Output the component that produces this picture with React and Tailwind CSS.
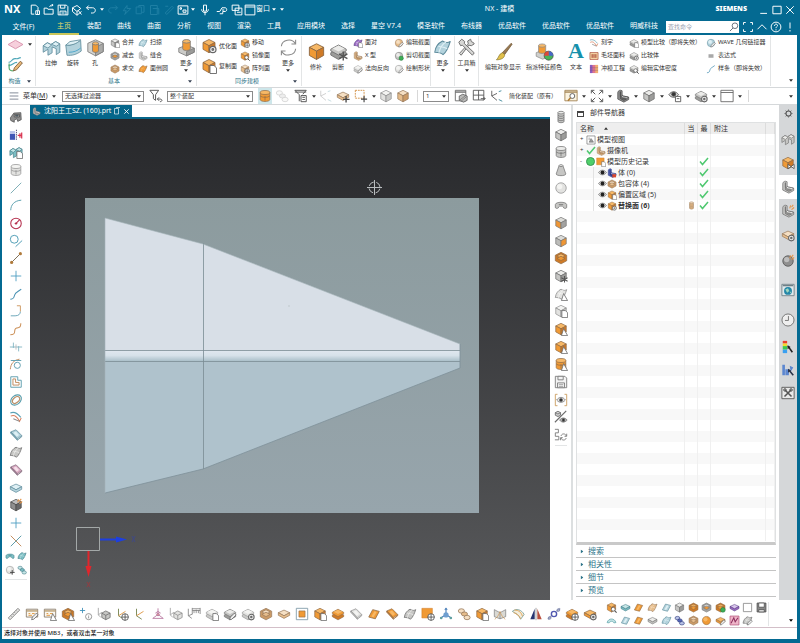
import { useState } from "react";

const TONES = {
  gray: ["#ececea", "#c6c6c4", "#9c9c9a", "#6c6c6c"],
  light: ["#f4f4f2", "#e2e2e0", "#cacac8", "#8e8e8e"],
  dark: ["#bdbdbd", "#8f8f8f", "#686868", "#484848"],
  orange: ["#f7b866", "#f09a35", "#cf7a26", "#8f6a45"],
  mix: ["#dcdcd8", "#ef9634", "#a2a2a0", "#757575"],
  mix2: ["#dcdcd8", "#bcbcb9", "#ef9634", "#757575"],
  tan: ["#f5dfc3", "#e6bd8c", "#cb9a66", "#97785a"],
  blue: ["#dff0f5", "#b3d2dc", "#8ab0bd", "#5d8b9b"],
  teal: ["#c5e6e6", "#7dbfc4", "#4f959d", "#3c7884"],
  red: ["#f3c9c0", "#d96a54", "#a33a2c", "#7c3028"],
  pink: ["#f6e0ea", "#d8a8c0", "#a87f98", "#80687a"],
  purple: ["#d9c5ec", "#9c6bc4", "#6b47a0", "#51367c"],
  navy: ["#b8c2e6", "#5566b8", "#2c3c8a", "#26327a"],
};

// Solid shapes and line drawings, all on a 16 x 16 grid. c = [top, left, right, stroke]
const ART = {
  cube: (c) => (
    <g stroke={c[3]} strokeWidth="0.8" strokeLinejoin="round">
      <path d="M8 1.5l6 3-6 3.2-6-3.2z" fill={c[0]} />
      <path d="M2 4.5l6 3.2v7l-6-3.4z" fill={c[1]} />
      <path d="M14 4.5L8 7.7v7l6-3.4z" fill={c[2]} />
    </g>
  ),
  hollow: (c) => (
    <g stroke={c[3]} strokeWidth="0.8" strokeLinejoin="round">
      <path d="M8 1.5l6.5 3.3v6.4L8 14.7l-6.5-3.5V4.8z" fill={c[2]} />
      <path d="M8 3.2l4.8 2.4L8 8.2 3.2 5.6z" fill={c[0]} />
      <path d="M3.4 8.4L8 6l4.6 2.4L8 11z" fill={c[1]} />
    </g>
  ),
  spring: (c) => (
    <g fill={c[0]} stroke={c[3]} strokeWidth="0.8">
      <path d="M4.5 3v10c0 2 7 2 7 0V3" fill={c[1]} />
      <ellipse cx="8" cy="3" rx="3.5" ry="1.5" />
      <path d="M4.5 6c1 1.6 6 1.6 7 0M4.5 8.5c1 1.6 6 1.6 7 0M4.5 11c1 1.6 6 1.6 7 0" fill="none" />
    </g>
  ),
  cylinder: (c) => (
    <g stroke={c[3]} strokeWidth="0.8">
      <path d="M2.5 4v8c0 3 11 3 11 0V4" fill={c[1]} />
      <ellipse cx="8" cy="4" rx="5.5" ry="2.3" fill={c[0]} />
      <path d="M8 8v5M2.5 8c2 2 9 2 11 0" fill="none" />
    </g>
  ),
  cone: (c) => (
    <g stroke={c[3]} strokeWidth="0.8">
      <path d="M5.8 3L2.5 12.5c0 2.6 11 2.6 11 0L10.2 3" fill={c[1]} />
      <ellipse cx="8" cy="3" rx="2.2" ry="1.1" fill={c[0]} />
    </g>
  ),
  sphere: (c) => (
    <g stroke={c[3]} strokeWidth="0.8">
      <circle cx="8" cy="8" r="6" fill={c[1]} />
      <circle cx="6.5" cy="6.3" r="3" fill={c[0]} stroke="none" />
    </g>
  ),
  torus: (c) => (
    <g stroke={c[3]} strokeWidth="0.8">
      <path d="M1.5 11V7.5C2 4 14 4 14.5 7.5V11c-1 1.5-4 1-4-1 0-1-5-1-5 0 0 2-3 2.5-4 1z" fill={c[1]} />
      <path d="M5.5 7.5h5" />
    </g>
  ),
  sheet: (c) => (
    <g stroke={c[3]} strokeWidth="0.9" strokeLinejoin="round">
      <path d="M2 11.5L6.5 3l7.5 2-4.5 8.5z" fill={c[1]} />
      <path d="M5 10.8l3.500-6 2.500.8-3.500 6z" fill={c[0]} stroke="none" />
    </g>
  ),
  sheet2: (c) => (
    <g stroke={c[3]} strokeWidth="0.8" strokeLinejoin="round">
      <path d="M2 4.5l6-2.500 6.500 6.500-5 4z" fill={c[1]} />
      <path d="M2 4.5v1.500l7.500 8v-1.500zM9.500 14l5-4V8.500" fill={c[2]} />
      <path d="M5 5.500l3-1.500 3.500 4-2.500 2z" fill={c[0]} stroke="none" />
    </g>
  ),
  surf: (c) => (
    <g stroke={c[3]} strokeWidth="0.9" strokeLinejoin="round">
      <path d="M1.5 12C2 7 5 4 8 2.5c3 2 5 1.5 6.5.5C13 8 11 12 8.5 14c-2-2-5-2-7-2z" fill={c[1]} />
      <path d="M4.5 7c2.5.5 5 .5 7.5 2M5 12.300C6 8 8 5 11 3.300" fill="none" stroke={c[0]} />
    </g>
  ),
  slab: (c) => (
    <g stroke={c[3]} strokeWidth="0.8" strokeLinejoin="round">
      <path d="M8 3.5l6.5 3L8 10 1.5 6.5z" fill={c[0]} />
      <path d="M1.5 6.5v3L8 13l6.5-3.500v-3L8 10z" fill={c[1]} />
    </g>
  ),
  stack: (c) => (
    <g stroke={c[3]} strokeWidth="0.7" strokeLinejoin="round">
      <path d="M1.5 9L8 5.5 14.5 9v2L8 14.7 1.5 11z" fill={c[2]} />
      <path d="M1.5 6L8 2.5 14.5 6v1.5L8 11 1.5 7.5z" fill={c[1]} />
      <path d="M3 5.500L8 3l5 2.500L8 8z" fill={c[0]} stroke="none" />
    </g>
  ),
  elbow: (c) => (
    <g stroke={c[3]} strokeWidth="0.7" strokeLinejoin="round">
      <path d="M1 12V6.500L4.500 4l3 1.500L11.500 3 15 5v7l-3 2V9L8.500 7.500v5L5 14.500V9.500z" fill={c[1]} />
      <path d="M1 6.500L4.500 4l3 1.500L11.500 3 15 5l-3 2-3.500-1.500L5 8.500z" fill={c[0]} />
    </g>
  ),
  revolve: (c) => (
    <g stroke={c[3]} strokeWidth="0.7" strokeLinejoin="round">
      <path d="M1.500 6C5 6.500 9 5 14 2l.500 9c-4 3-8 4-12 3.500z" fill={c[1]} />
      <path d="M1.500 6L5 3l9-1.500c-3 3.500-8 5-12.500 4.500z" fill={c[0]} />
      <path d="M4 12c4 0 7-1 10-3.500" fill="none" stroke="#3fa0c8" />
    </g>
  ),
  hole: (c) => (
    <g strokeLinejoin="round" strokeWidth="0.7" stroke="#7b7b7b">
      <path d="M8 1.500l6.500 3v7L8 15l-6.500-3.500v-7z" fill="#d3d3d0" />
      <path d="M8 8v7l6.500-3.500v-7z" fill="#aaaaa8" />
      <path d="M5.500 4.500v6.500c0 1.500 5 1.500 5 0V4.500" fill={c[1]} />
      <ellipse cx="8" cy="4.500" rx="2.500" ry="1.300" fill={c[0]} />
    </g>
  ),
  boss: (c) => (
    <g strokeLinejoin="round" strokeWidth="0.7" stroke="#7b7b7b">
      <path d="M1.500 8.500L8 6l6.500 2.500V12L8 15l-6.500-3z" fill="#cbcbc8" />
      <path d="M8 11.500V15l6.500-3V8.500z" fill="#9b9b99" />
      <path d="M4.800 2.800V9c0 2 6.400 2 6.400 0V2.800" fill={c[1]} />
      <ellipse cx="8" cy="2.800" rx="3.200" ry="1.500" fill={c[0]} />
    </g>
  ),
  bracket: (c) => (
    <g stroke={c[3]} strokeWidth="0.8" strokeLinejoin="round">
      <path d="M2 4c0-2 3-3.500 5-2v5c1 2 5 1 7.500 2.500v2.500L9 15 2 11.500z" fill={c[1]} />
      <path d="M5 3v5.500c1 2 5 1.500 7 3L9 13 5 11z" fill={c[2]} />
      <path d="M7 7c1 2 5 1 7.500 2.500L12 11c-2-1-5-.5-6-2z" fill={c[0]} />
    </g>
  ),
  clamp: (c) => (
    <g stroke={c[3]} strokeWidth="0.8">
      <path d="M1.500 9l4-5.500 8-.5.500 8-4 2-1-3-3 1.500v2.500L2 12z" fill={c[1]} />
      <path d="M6 5h6v3H6z" fill={c[0]} />
      <path d="M7.500 6h3v1h-3z" fill="#3f7fa8" />
    </g>
  ),
  push: () => (
    <g>
      <path d="M1 6.500h6v7H1z" fill="#4056b5" />
      <path d="M1 3.500h6v3H1z" fill="#b9c3ea" />
      <path d="M8.500 2v12" stroke="#3a3a6e" strokeDasharray="1.500 1" />
      <path d="M10 8.500h5M12.500 6v5M14.500 5v7" stroke="#d93450" strokeWidth="1.400" fill="none" />
    </g>
  ),
  line: () => <path d="M2 14L14 2" stroke="#6ea3ad" strokeWidth="1" />,
  arc: () => <path d="M2 14C2 8 6 3 14 2.500" stroke="#5b9fae" strokeWidth="1.100" fill="none" />,
  circle: () => (
    <g stroke="#b5304e" fill="none" strokeWidth="1.200">
      <circle cx="8" cy="8.500" r="6" />
      <path d="M8 8.500l4-4M8 7v3M6.500 8.500h3" />
    </g>
  ),
  tangent: () => (
    <g stroke="#4f9db5" fill="none" strokeWidth="1.100">
      <circle cx="6" cy="6" r="4.500" />
      <path d="M7.500 14.500L15 7.500" />
    </g>
  ),
  segment: () => (
    <g fill="#b07b3c" stroke="#7a6a52">
      <path d="M3 13L13 3" strokeWidth="1.100" />
      <circle cx="3" cy="13" r="1.800" stroke="none" />
      <circle cx="13" cy="3" r="1.800" stroke="none" />
    </g>
  ),
  plus: () => <path d="M8 2v12M2 8h12" stroke="#4a9cc0" strokeWidth="1" />,
  cross: () => (
    <g strokeWidth="1.100">
      <path d="M2 14L14 2" stroke="#5a9aa8" />
      <path d="M2 2l12 12" stroke="#c28a5c" />
    </g>
  ),
  spline: () => <path d="M1.500 14c4 0 4-2 5-5s3-3 7.500-6.500" stroke="#4b93b4" strokeWidth="1.200" fill="none" />,
  fillet: () => (
    <g fill="none" strokeWidth="1.100">
      <path d="M2 13.500h5c4 0 6-2 6-5" stroke="#6aa6b8" />
      <path d="M13 8.500V2H9" stroke="#cf9a64" />
    </g>
  ),
  curve: () => <path d="M1.500 14.500c4 0 5-1 5-4s2-4 4-4 3-2 3-5" stroke="#cc9058" strokeWidth="1.200" fill="none" />,
  trim: () => (
    <g strokeWidth="1" fill="none">
      <path d="M1 8h14M5 3v6M11 7v6" stroke="#7fb2c0" />
      <path d="M8 5v6" stroke="#bbb" />
    </g>
  ),
  arccircle: () => (
    <g fill="none" stroke="#63a0b0" strokeWidth="1.100">
      <path d="M1.500 14C2 8 5 3.500 12 2.500" stroke="#c08d60" />
      <circle cx="9.500" cy="9.500" r="3.500" />
      <path d="M2 4h12" />
    </g>
  ),
  offset: () => (
    <g fill="none" strokeWidth="1.100">
      <path d="M2 2h8v4h4v8H2z" stroke="#63a0b0" />
      <path d="M4.500 4.500h3v4h4v3h-7z" stroke="#c08d60" />
    </g>
  ),
  ring: () => (
    <g fill="none" strokeWidth="1.300" transform="rotate(-40 8 8)">
      <ellipse cx="8" cy="8" rx="6.800" ry="5" stroke="#5a9fae" />
      <ellipse cx="8" cy="8" rx="4.800" ry="3" stroke="#b98d66" />
    </g>
  ),
  wrap: () => (
    <g fill="none" strokeWidth="1.200">
      <path d="M1.500 3.500c4-2 8 0 12 5" stroke="#5aa2b5" />
      <path d="M2 7c4-2 7 0 10 6l2-4" stroke="#d97d5a" />
      <path d="M5 10l7 3" stroke="#8a8a8a" />
    </g>
  ),
  axes: () => (
    <g fill="none" strokeWidth="1.100">
      <path d="M4 2v8l6 4" stroke="#7d8a5a" />
      <path d="M4 10l8-5" stroke="#e09a4a" />
    </g>
  ),
  axes3: () => (
    <g fill="none" stroke="#b878a0" strokeWidth="1">
      <path d="M8 1.500v7L2 13M8 8.500l6 4.500M2 13h12M5 7l3-2 3 2" />
      <circle cx="8" cy="8.500" r="1.500" fill="#d99" />
    </g>
  ),
  csys: (c) => (
    <g fill="none" strokeWidth="0.900">
      <path d="M1.500 1v8l3 3M1.500 9l4-3" stroke="#9a9a9a" />
      <path d="M5.500 7l4.500-2.500L15 7v5l-5 2.500L5.500 12z" fill={c[1]} stroke={c[3]} />
      <path d="M5.500 7l4.500 2.500L15 7M10 9.500v5" stroke={c[3]} />
    </g>
  ),
  ruler: () => (
    <g stroke="#6f6f6f" strokeWidth="0.900">
      <path d="M1.500 12.500l11-11 2 2-11 11z" fill="#e8e8e6" />
      <path d="M4.500 10l1 1M6.500 8l1 1M8.500 6l1 1M10.500 4l1 1" />
    </g>
  ),
  panel: () => (
    <g stroke="#8a7d6a" fill="none">
      <path d="M1.500 2.500h13v9h-13z" fill="#faf7f0" />
      <path d="M1.500 4.500h13" strokeWidth="1.500" stroke="#b59a6c" />
      <path d="M4 7.500h2M8 7.500h3M4 9.500h4" stroke="#e0902f" />
    </g>
  ),
  plusinfo: () => (
    <g fill="none" stroke="#8a8a8a">
      <path d="M4 1v6M1 4h6" stroke="#3e8fb8" />
      <circle cx="11" cy="11" r="3.500" />
      <path d="M11 9v.7M11 10.500v2.500" />
    </g>
  ),
  dims: () => (
    <g stroke="#7a7a7a" fill="none" strokeWidth="0.900">
      <path d="M1.500 2v8l4 3M1.500 10l5-2M6 2h9M6 1v7M15 1v7M8 4v3M10.500 3v4M13 4v3M6 4h9" />
    </g>
  ),
  frame: (c) => (
    <g>
      <path d="M1.500 1.500h13v13h-13z" fill="#fff" stroke="#7f9aa8" />
      <path d="M4.500 4.500h7v7h-7z" fill={c[1]} stroke={c[3]} strokeWidth="0.700" />
    </g>
  ),
  square: (c) => <path d="M1 1.500h12v11H1z" fill={c[1]} stroke={c[2]} strokeWidth="0.600" />,
  hullblue: () => (
    <g>
      <path d="M8 1.500v7l6 4M8 8.500l-6 4" stroke="#4a7fb8" strokeWidth="1.300" fill="none" />
      <circle cx="8" cy="9" r="3" fill="#6f9fd0" />
      <path d="M6 3l2-2.500L10 3z" fill="#4a7fb8" />
      <circle cx="2.500" cy="12.500" r="1.500" fill="#5fa0a0" />
      <circle cx="13.500" cy="12.500" r="1.500" fill="#5fa0a0" />
    </g>
  ),
  book: () => (
    <g stroke="#7c7c7c" strokeWidth="0.800" fill="#d9d9d4">
      <path d="M1.500 3L8 6.500 14.500 3v8L8 13.500 1.500 11z" />
      <path d="M8 6.500v7" />
      <path d="M2 14c2-1 5-5 6-9M14 14c-2-1-5-5-6-9" stroke="#d09a58" fill="none" />
    </g>
  ),
  fan: () => (
    <g fill="none" strokeWidth="1">
      <path d="M1.500 5C6 1 12 3 15 8.500L11 14C9 9 5 7 1.500 5z" fill="#f3eddc" stroke="#7ea2a0" />
      <path d="M3 6.500c4 1 6 3 8 7M4 3.500c5 0 8 3 9 7" stroke="#e0a050" />
    </g>
  ),
  mirror: () => (
    <g>
      <path d="M6.500 2v12H1.500z" fill="#27346f" />
      <path d="M9.500 2v12h5z" fill="#b8503f" />
      <path d="M8 1v14" stroke="#555" strokeWidth="0.600" />
    </g>
  ),
  orbit: () => (
    <g fill="none" stroke="#8088b0" strokeWidth="1.100">
      <circle cx="8" cy="8" r="3" stroke="#5058b0" strokeWidth="1.600" />
      <path d="M1 14l4-3.500M11 5l4-3.500" strokeWidth="2" stroke="#a0a6c0" />
      <circle cx="3" cy="12.500" r="1.500" />
      <circle cx="13" cy="3.500" r="1.500" />
    </g>
  ),
  chain: (c) => (
    <g stroke={c[3]} strokeWidth="0.900" fill={c[0]}>
      <ellipse cx="5" cy="4.500" rx="3.500" ry="2.500" />
      <ellipse cx="8.500" cy="8" rx="3.500" ry="2.300" fill={c[1]} />
      <ellipse cx="11.500" cy="12" rx="3.500" ry="2.500" />
    </g>
  ),
  diskette: () => (
    <g stroke="#7a7a7a" fill="#f3f3f3">
      <path d="M1.500 1.500h11l2 2v11h-13z" />
      <path d="M4.500 1.500h6v4h-6zM4 9h8v5.500H4z" />
      <path d="M5.500 11h5M5.500 13h5" strokeWidth="0.700" />
    </g>
  ),
  eyebox: () => (
    <g fill="none">
      <path d="M4 1.500H1.500v13H4M12 1.500h2.500v13H12" stroke="#c99a5a" />
      <path d="M3 8c3-4 7-4 10 0-3 3.500-7 3.500-10 0z" stroke="#666" strokeWidth="0.800" fill="#e6e6e6" />
      <circle cx="8" cy="8" r="2" fill="#333" />
    </g>
  ),
  eyeslash: () => (
    <g fill="none" stroke="#6a6a6a">
      <path d="M1 14L14 1" strokeWidth="1.300" />
      <path d="M1.500 3l3-1.500 3 1.500v3l-3 1.500-3-1.500zM1.500 3l3 1.500 3-1.500" fill="#ccc" />
      <path d="M6.500 11.500c2-3 6-3 8.500 0-2.500 3-6.500 3-8.500 0z" fill="#ddd" />
      <circle cx="10.800" cy="11.500" r="1.800" fill="#333" />
    </g>
  ),
  swap: () => (
    <g fill="none" stroke="#777">
      <path d="M1 1.500h4v4H1.500v4h4v4H1" />
      <path d="M8 9c1-3 5-3 6 0M14.500 6.500v3H12M14 11.500c-1 3-5 3-6 0M7.500 14v-3H10" />
    </g>
  ),
  diamond: () => (
    <path d="M8 4l7 4-7 4-7-4z" fill="#f6cfdc" stroke="#d58aa6" strokeWidth="0.800" />
  ),
  sketch: () => (
    <g fill="none" strokeWidth="1.100">
      <path d="M1.500 6C5 6 4 2 8 2.500s2-1 5-1M1.500 9c4 0 4-3 8-3" stroke="#4fa7b8" />
      <path d="M2 7v4c0 2 2 3 4 3" stroke="#57a86b" />
      <path d="M6 14l1-3 5.500-6 2 1.500L9 13z" fill="#e8b878" stroke="#7a5a38" strokeWidth="0.800" />
    </g>
  ),
  sync: () => (
    <g fill="none" stroke="#8a8a8a" strokeWidth="0.900">
      <path d="M2 7c.5-6 9-7 11.500-2.500M14 1.500v3.500h-3.500M14 9c-.5 6-9 7-11.500 2.500M2 14.500V11h3.500" />
    </g>
  ),
  tools: () => (
    <g stroke="#6e6e6e" fill="#d8d8d6" strokeWidth="0.800" strokeLinejoin="round">
      <path d="M2 13l7.500-8-.5-2.500L11.500 1l.5 2 2 1 .5 1-2.500 1.500-2-.5L3.500 14.500z" />
      <path d="M1.500 3.500L4 1l2.500 2-.5 1.500 8.500 8-1.500 2L4.500 6 3 6.500z" />
    </g>
  ),
  brush: () => (
    <g strokeWidth="0.600">
      <path d="M7 9L14.500 1l.8.800L9 10.500z" fill="#9a7a52" stroke="#6e5636" />
      <path d="M7 9l2 1.500c0 3-3 4.500-7 4.500 2-1.500 2-5 5-6z" fill="#e2c04a" stroke="#8c7a30" />
    </g>
  ),
  colors: () => (
    <g strokeWidth="0.600" stroke="#8a8a8a">
      <path d="M1 9l5-2 6 2v3l-5.500 2.500-5.500-2.500z" fill="#cfcfcc" />
      <path d="M3 3v5.500c0 1.500 6 1.500 6 0V3" fill="#f09a35" />
      <ellipse cx="6" cy="3" rx="3" ry="1.400" fill="#f7b866" />
      <circle cx="11.500" cy="11.500" r="3.800" fill="#46b558" stroke="#444" />
      <path d="M11.500 11.500V7.700a3.800 3.800 0 0 1 3.800 3.800z" fill="#4a66c9" stroke="none" />
      <path d="M11.500 11.500V7.700a3.800 3.800 0 0 0-3.800 3.800z" fill="#e0453c" stroke="none" />
    </g>
  ),
  grid: () => (
    <g fill="none" stroke="#a33c2a">
      <path d="M1.500 2.500h13v11h-13z" fill="#f6d7a8" />
      <path d="M5 5v6M8 5v6M11 5v6" strokeWidth="1.600" />
    </g>
  ),
  fade: () => (
    <g>
      <path d="M1.500 1.500h13v13h-13z" fill="#e0748c" />
      <path d="M1.500 1.500h4v13h-4z" fill="#8a5cc0" />
      <path d="M10 1.500h4.500v13H10z" fill="#f0b070" />
      <path d="M1.500 6h13M1.500 10h13" stroke="#7c4a6c" strokeWidth="0.600" />
    </g>
  ),
  equals: () => <path d="M4 6.500h8M4 9.500h8" stroke="#666" strokeWidth="1.600" />,
  funnel: () => (
    <g fill="none" stroke="#555" strokeWidth="1.100">
      <path d="M1 1.500h10L7.500 6.500V13L5 11V6.500z" />
      <path d="M9.500 11.500h3c3 0 3 3 0 3M11.500 9.500l-2 2 2 2" />
    </g>
  ),
  funnellist: () => (
    <g fill="none" stroke="#555" strokeWidth="1.100">
      <path d="M1 1.500h13L10 6M1 1.500l5 5V14M1 3.500h13" />
      <path d="M8 7.500h6v7H8zM9.500 9.500h3M9.500 12h3" />
    </g>
  ),
  select: () => (
    <g fill="none">
      <path d="M1.500 1.500h10v9h-10z" stroke="#d08a3a" strokeDasharray="2 1" />
      <path d="M11.500 8v7M8 11.500h7" stroke="#444" strokeWidth="1.300" />
    </g>
  ),
  window: () => (
    <g fill="none" stroke="#666">
      <path d="M1 1.500h14v13H1z" fill="#fff" />
      <path d="M1 4h14" />
    </g>
  ),
  winpart: () => (
    <g fill="none" stroke="#666">
      <path d="M1.500 1.500h12v12h-12z" fill="#fff" />
      <path d="M1.500 3.500h12" strokeWidth="1.500" />
      <path d="M6 8l4-2 5 2v5l-4 2-5-2z" fill="#b9b9b7" />
      <path d="M6 13l8-6M8 14l6-5" strokeWidth="0.700" />
    </g>
  ),
  viewbox: () => (
    <g fill="none" stroke="#666">
      <path d="M1.500 1.500h13v13h-13z" fill="#fff" />
      <path d="M5 11.500l3-6 3 4 1 2z" fill="#999" strokeWidth="0.800" />
      <path d="M5 4v4" />
    </g>
  ),
  layout: () => (
    <g fill="none" stroke="#555">
      <path d="M1.500 1.500h12v11h-12zM7.500 1.500v11M1.500 7h12" />
      <path d="M10 11h5M13 9l2 2-2 2" />
    </g>
  ),
  nodes: () => (
    <g fill="none" stroke="#666" strokeWidth="1.100">
      <path d="M2 2v6l6 5M2 8l6-3" />
      <path d="M10 3l3-1M10 12l4 2" stroke="#4a90a0" />
    </g>
  ),
  fit: () => (
    <g fill="none" stroke="#555" strokeWidth="1.100">
      <path d="M5 1.500H1.500V5M11 1.500h3.500V5M14.500 11v3.500H11M5 14.500H1.500V11" />
      <path d="M2 2l4 4M14 2l-4 4M2 14l4-4M14 14l-4-4" />
    </g>
  ),
  zoomwin: () => (
    <g fill="none" stroke="#a08050">
      <path d="M1 1.500h14v12H1z" fill="#fbf3e0" />
      <path d="M1 3.500h14" strokeWidth="1.500" />
      <circle cx="9.500" cy="8" r="2.800" stroke="#555" fill="#fff" />
      <path d="M7.500 10l-3 3.500" stroke="#b07a30" strokeWidth="1.600" />
    </g>
  ),
  eye: () => (
    <g fill="none" stroke="#555">
      <path d="M1 6.500C4 2 9 2 12 6.500c-3 4-8 4-11 0z" fill="#ddd" />
      <circle cx="6.500" cy="6" r="2.300" fill="#333" />
      <path d="M8.500 8.500h6v6h-6zM10 11h3" fill="#fff" />
    </g>
  ),
  globe: () => (
    <g>
      <path d="M1 1.500h14v13H1z" fill="#dfe9ec" stroke="#6f7f86" />
      <path d="M2 3h12" stroke="#6f7f86" strokeWidth="1.500" />
      <circle cx="8" cy="9" r="4.500" fill="#2487a8" />
      <path d="M5 7.500l3-1.500 1.500 3L7 11zM10 9.500l1.500 1-1 1.500z" fill="#9fd6c0" />
    </g>
  ),
  clock: () => (
    <g fill="#eeeeee" stroke="#6a6a6a">
      <circle cx="8" cy="8" r="6.900" />
      <path d="M8.500 3.500v5H4.500" fill="none" />
    </g>
  ),
  rainbow: () => (
    <g>
      <path d="M2 1h5v3H2z" fill="#e8402c" />
      <path d="M2 4h5v3H2z" fill="#f2d92e" />
      <path d="M2 7h5v4H2z" fill="#3cc84e" />
      <path d="M2 11h5v4H2z" fill="#3aa0f0" />
      <path d="M8 7l5 7" stroke="#222" strokeWidth="1.800" />
      <path d="M7.500 6v4.500L11 8z" fill="#222" />
    </g>
  ),
  bluearrow: () => (
    <g>
      <path d="M1.500 2h3v12h-3zM5 7h4v7H5zM10 3l4 2-3 5z" fill="#5b86d0" />
      <path d="M9 8l5 6" stroke="#2a3348" strokeWidth="1.800" />
      <path d="M8 6.500V11l3.500-2.500z" fill="#2a3348" />
    </g>
  ),
  toolbox: () => (
    <g stroke="#555" fill="none">
      <path d="M1 1.500h14v13H1z" fill="#e9e9e9" />
      <path d="M4 4l8 8M12 4l-8 8" strokeWidth="1.800" />
      <circle cx="4.500" cy="4.500" r="1.500" />
      <circle cx="11.500" cy="4.500" r="1.500" />
    </g>
  ),
  gear: () => (
    <g fill="none" stroke="#555">
      <circle cx="8" cy="8" r="4.500" strokeWidth="2" />
      <path d="M8 1v2M8 13v2M1 8h2M13 8h2M3 3l1.500 1.500M11.500 11.500L13 13M13 3l-1.500 1.500M4.500 11.500L3 13" strokeWidth="1.600" />
    </g>
  ),
  arch: () => <path d="M1.500 11c2-7 11-7 13 0l-3 .5c-1.500-3-5-3-7 0z" fill="#bfe0e2" stroke="#4e9aa2" strokeWidth="0.900" />,
  box: () => <path d="M2 2h12v12H2z" fill="#fff" stroke="#888" strokeWidth="1.200" />,
  tray: () => (
    <g stroke="#444" strokeWidth="1">
      <path d="M1.500 1.500h13v13h-13z" fill="#8a8a8a" />
      <path d="M4 1.500h8v6H4z" fill="#fff" />
      <path d="M4 11h8v3.500H4z" fill="#ddd" />
    </g>
  ),
  hatch: () => (
    <g>
      <path d="M1.500 1.500h13v13h-13z" fill="#efb4c8" stroke="#b04f78" />
      <path d="M3 12l4-8 2 6 4-6" fill="none" stroke="#8a2c5c" strokeWidth="1.500" />
    </g>
  ),
};

// Small marks that sit in the lower right corner of a shape
const BADGES = {
  page: <path d="M9 7.500h4l2.500 2.500v5.500H9z" fill="#fff" stroke="#666" strokeWidth="0.900" />,
  tri: <path d="M11 7.500l4.500 8h-7z" fill="#fff" stroke="#666" strokeWidth="0.900" />,
  plus: <path d="M11.500 8v7.500M8 11.800h7.500" stroke="#444" strokeWidth="1.500" />,
  move: (
    <g stroke="#444" fill="#fff" strokeWidth="0.900">
      <circle cx="11.500" cy="11.500" r="3.800" />
      <path d="M11.500 7.700v7.600M7.700 11.500h7.600" />
    </g>
  ),
  gear: (
    <g stroke="#666" fill="#eee" strokeWidth="1.200">
      <circle cx="11.800" cy="11.500" r="3.200" />
      <circle cx="11.800" cy="11.500" r="0.800" />
    </g>
  ),
  lens: (
    <g stroke="#555" fill="#fff">
      <circle cx="10.500" cy="10.500" r="2.800" />
      <path d="M12.500 12.500l3 3" strokeWidth="1.600" />
    </g>
  ),
  bow: <path d="M8 9.500v5l7-5v5z" fill="#fff" stroke="#555" strokeWidth="1" />,
  star: <path d="M12 8v7.500M8.500 10l7 4M15.500 10l-7 4" stroke="#555" strokeWidth="1.200" />,
  spark: <path d="M10 5l1-3.500M12 6.500L15 4M12 3.500l2-2.500" stroke="#e59446" strokeWidth="1.200" />,
  green: <circle cx="11.500" cy="11.500" r="3.500" fill="#3dae55" stroke="#23703a" strokeWidth="0.700" />,
  red: <path d="M8.500 10h6v5h-6z" fill="#d9472f" />,
  pen: <path d="M7.500 14.500l1-3L13 7l2 2-5 5z" fill="#eee" stroke="#666" strokeWidth="0.900" />,
};

// spec is "shape [tone] [badge]"
function Icon({ spec, className = "size-[14px]" }) {
  const [shape, tone = "gray", badge] = spec.split(" ");
  return (
    <svg viewBox="0 0 16 16" className={`shrink-0 ${className}`} fill="none" aria-hidden="true">
      {ART[shape](TONES[tone])}
      {badge && BADGES[badge]}
    </svg>
  );
}

function Caret({ className = "" }) {
  return (
    <svg viewBox="0 0 6 4" className={`h-[3px] w-1 shrink-0 ${className}`} aria-hidden="true">
      <path d="M0 0h6L3 4z" fill="currentColor" />
    </svg>
  );
}

/* ---------- title bar ---------- */

const quickAccess = [
  ["新建", "M3 1.500h6l3 3v4M3 1.500v12h4M9 9h5v5H9zM11.500 9v5"],
  ["打开", "M1.500 13.500v-8h4l1 1.500h7v6.500zM9 4c0-2 2-2.500 4-2.500M11.500 0L13.500 1.500 11.500 3"],
  ["保存", "M1.500 1.500h11l2 2v11h-13zM4.500 1.500v4h6v-4M4 14.500v-5h8v5M6 12h4"],
  ["另存为", "M2 5l6-3 5 4-5 4zM2 5v5l6 5v-5M8 15l6-5M9 8l5 6"],
  ["撤消", "M2 5h8c5 0 5 7 0 7H8M5 2L2 5l3 3"],
];

const dimActions = [
  "M14 5H6C1 5 1 12 6 12M11 2l3 3-3 3",
  "M8 2L3 9h4l-2 5 8-8H8z",
  "M1.500 4h7v9h-7zM5 4V2h7v9h-3",
  "M2 2h9v12H2zM5 6h8v8",
  "M3 12l9-9 2 2-9 9zM3 3h4",
];

function WhiteIcon({ d, className = "size-3" }) {
  return (
    <svg viewBox="0 0 16 16" className={`shrink-0 ${className}`} fill="none" stroke="currentColor" strokeWidth="1.300" aria-hidden="true">
      <path d={d} />
    </svg>
  );
}

function QuickButton({ label, d, className = "w-[14px]" }) {
  return (
    <button type="button" aria-label={label} className={`flex shrink-0 justify-center ${className}`}>
      <WhiteIcon d={d} />
    </button>
  );
}

function TitleBar() {
  return (
    <div className="relative flex h-[19px] items-center text-white">
      <span className="w-[26px] pl-[2px] text-[11px] font-bold">NX</span>
      {quickAccess.map(([label, d]) => (
        <QuickButton key={label} label={label} d={d} />
      ))}
      <Caret className="mx-[2px]" />
      <div className="flex text-[#1f7fa5]">
        {dimActions.map((d) => (
          <QuickButton key={d} label="重复" d={d} />
        ))}
      </div>
      <QuickButton label="命令" d="M1.500 2.500h13v11h-13zM4 5h2v2H4zM8 8h4v3H8z" />
      <Caret className="mx-px" />
      <QuickButton label="录音" d="M6 1.500h4v8H6zM3.500 7c0 6 9 6 9 0M8 12v3" className="w-[18px]" />
      <QuickButton label="触控" d="M1 10h4l3-5h4c3 0 3 5 0 5H9v3H5M8 8h3" className="w-4" />
      <QuickButton label="切换窗口" d="M1.500 1.500h9v7h-9zM5.500 5.500h9v9h-9zM8 11h5" />
      <button type="button" className="flex items-center text-[7px]">
        <WhiteIcon d="M1.500 1.500h13v13h-13zM1.500 4h13" />
        窗口
      </button>
      <Caret className="ml-[2px]" />
      <Caret className="ml-1" />
      <h1 className="absolute inset-x-0 pl-[200px] text-center text-[7px]">NX - 建模</h1>
      <span className="ml-auto pr-[10px] text-[7px] font-black">SIEMENS</span>
      <QuickButton label="最小化" d="M3 12.500h9" />
      <QuickButton label="最大化" d="M2.500 3h11v10h-11z" className="w-3" />
      <QuickButton label="关闭" d="M3 3l10 10M13 3L3 13" />
    </div>
  );
}

const tabs = [
  "主页", "装配", "曲线", "曲面", "分析", "视图", "渲染", "工具", "应用模块", "选择",
  "星空 V7.4", "模圣软件", "布线器", "优品软件", "优品软件", "优品软件", "明威科技",
];

function TabBar() {
  const [active, setActive] = useState(0);
  return (
    <nav className="flex h-4 items-stretch text-[7px] text-white">
      <button type="button" className="mr-1 w-[43px] shrink-0 whitespace-nowrap">文件(F)</button>
      {tabs.map((tab, i) => (
        <button
          key={i}
          type="button"
          onClick={() => setActive(i)}
          className={`shrink-0 border-b-2 px-2 whitespace-nowrap ${
            i === active ? "border-[#c9c65a] text-[#e6dc6a]" : "border-transparent"
          }`}
        >
          {tab}
        </button>
      ))}
      <div className="flex h-3 min-w-0 flex-1 items-center self-center bg-white">
        <input
          aria-label="查找命令"
          placeholder="查找命令"
          className="w-0 flex-1 px-[2px] text-[6px] text-gray-700 placeholder:text-gray-400"
        />
        <WhiteIcon d="M9.500 1.500a4 4 0 1 1 0 9 4 4 0 0 1 0-9zM6.500 9.500L1.500 14.500" className="size-[10px] text-gray-600" />
      </div>
      <div className="ml-[2px] flex">
        <QuickButton label="全屏" d="M2 5V2h3M11 2h3v3M14 11v3h-3M5 14H2v-3" className="w-[14px] items-center" />
        <QuickButton label="折叠" d="M2 11l6-6 6 6" className="w-[14px] items-center" />
        <QuickButton label="帮助" d="M8 1.500a6.500 6.500 0 1 1 0 13 6.500 6.500 0 0 1 0-13zM6 6.500c0-3 4-3 4-.5 0 1.500-2 1.500-2 3.500M8 11v1.500" className="w-[14px] items-center" />
        <QuickButton label="更多" d="M8 2v8M8 12v2" className="w-[14px] items-center" />
      </div>
    </nav>
  );
}

/* ---------- ribbon ---------- */

function BigButton({ label, icon, more, low, className = "w-[22px]" }) {
  return (
    <button type="button" className={`flex shrink-0 flex-col items-center text-[6px] leading-[8px] ${low ? "pt-[6px]" : "pt-[2px]"} ${className}`}>
      {icon === "text" ? (
        <span className="h-[19px] font-['Liberation_Serif',serif] text-[22px] leading-[17px] font-bold text-[#1691ab]">A</span>
      ) : (
        <Icon spec={icon} className="size-[19px]" />
      )}
      <span className="mt-[2px] whitespace-nowrap">{label}</span>
      {more && <Caret className="mt-[2px]" />}
    </button>
  );
}

function SmallColumn({ items, className = "" }) {
  return (
    <div className={`flex shrink-0 flex-col ${className}`}>
      {items.map(([label, icon]) => (
        <button key={label} type="button" className="flex h-[13px] items-center gap-[2px] text-[6px] whitespace-nowrap">
          <Icon spec={icon} className="size-[10px]" />
          {label}
        </button>
      ))}
    </div>
  );
}

function Group({ title, more, className, children }) {
  return (
    <section className={`flex shrink-0 flex-col border-r border-[#e3e5e6] ${className}`}>
      <div className="flex flex-1">{children}</div>
      <div className="flex h-[10px] items-center justify-center text-[6px] text-[#2c7388]">
        <span className="flex-1 text-center">{title}</span>
        {more && <Caret className="mr-1 text-gray-700" />}
      </div>
    </section>
  );
}

function Ribbon() {
  return (
    <div className="flex h-[52px] bg-white py-px text-[#333]">
      <Group title="构造" more className="w-[34px]">
        <div className="flex flex-col gap-[3px] pl-[5px]">
          <button type="button" aria-label="基准平面" className="flex items-center gap-1">
            <Icon spec="diamond" className="size-[17px]" />
            <Caret />
          </button>
          <button type="button" aria-label="草图">
            <Icon spec="sketch" className="size-[17px]" />
          </button>
        </div>
      </Group>

      <Group title="基本" more className="w-[161px] pl-1">
        <BigButton label="拉伸" icon="elbow blue" />
        <BigButton label="旋转" icon="revolve blue" />
        <BigButton label="孔" icon="hole orange" />
        <SmallColumn className="ml-1 w-7" items={[["合并", "cube gray page"], ["减去", "hollow mix"], ["求交", "hollow tan"]]} />
        <SmallColumn className="w-[37px]" items={[["扫掠", "surf blue"], ["缝合", "bracket light"], ["面倒圆", "surf orange"]]} />
        <BigButton label="更多" icon="boss orange" more />
      </Group>

      <Group title="同步建模" more className="w-[105px] pl-1">
        <div className="flex w-[39px] flex-col">
          {[["优化面", "cube orange gear"], ["复制面", "cube orange page"]].map(([label, icon]) => (
            <button key={label} type="button" className="flex h-5 items-center gap-[2px] text-[6px] whitespace-nowrap">
              <Icon spec={icon} className="size-4" />
              {label}
            </button>
          ))}
        </div>
        <SmallColumn className="w-[37px]" items={[["移动", "cube orange move"], ["镜像面", "cube orange lens"], ["阵列面", "cube tan move"]]} />
        <BigButton label="更多" icon="sync" more />
      </Group>

      <Group className="w-[129px] pl-[3px]">
        <BigButton label="修补" icon="cube orange" low />
        <BigButton label="剪断" icon="stack gray star" low />
        <SmallColumn className="ml-1 w-[41px]" items={[["面对", "surf purple page"], ["X 型", "bracket tan"], ["法向反向", "stack light pen"]]} />
        <SmallColumn items={[["编辑截面", "sphere tan pen"], ["剪切截面", "sphere gray green"], ["绘制形状", "sphere light pen"]]} />
      </Group>

      <Group className="w-6">
        <BigButton label="更多" icon="surf blue" more className="w-[23px]" />
      </Group>

      <Group className="w-6">
        <BigButton label="工具箱" icon="tools" more className="w-[23px]" />
      </Group>

      <Group className="w-[292px] pl-1">
        <BigButton label="编辑对象显示" icon="brush" low className="w-[40px]" />
        <BigButton label="指派特征颜色" icon="colors" low className="w-[42px]" />
        <BigButton label="文本" icon="text" low />
        <SmallColumn className="ml-[2px] w-10" items={[["刻字", "wrap"], ["毛坯面料", "grid"], ["冲模工程", "fade"]]} />
        <SmallColumn className="w-[77px]" items={[["模型比较（即将失效）", "stack gray page"], ["比较体", "stack gray gear"], ["编辑实体密度", "stack gray lens"]]} />
        <SmallColumn items={[["WAVE 几何链接器", "sphere blue pen"], ["表达式", "equals"], ["样条（即将失效）", "spline"]]} />
      </Group>
      <Caret className="mt-auto mr-1 mb-1 ml-auto" />
    </div>
  );
}

/* ---------- selection bar ---------- */

function Tool({ label, icon, drop, dim, on, className = "w-[18px]" }) {
  return (
    <>
      <button
        type="button"
        aria-label={label}
        className={`flex h-4 shrink-0 items-center justify-center ${className} ${dim ? "opacity-30" : ""} ${on ? "bg-[#cde6ea]" : ""}`}
      >
        <Icon spec={icon} />
      </button>
      {drop && <Caret className="mx-[2px]" />}
    </>
  );
}

function Picker({ label, value, className }) {
  return (
    <div className={`relative shrink-0 ${className}`}>
      <select aria-label={label} className="block h-[11px] w-full appearance-none border border-[#8b8b8b] bg-white pl-[2px] text-[6px] leading-[9px]">
        <option>{value}</option>
      </select>
      <Caret className="pointer-events-none absolute top-1 right-[3px]" />
    </div>
  );
}

function SelectionBar() {
  return (
    <div className="flex h-[18px] items-center border-y border-[#d5d8da] bg-white text-[#333]">
      <button type="button" className="flex w-[60px] shrink-0 items-center gap-1 pl-[7px] text-[7px] whitespace-nowrap">
        <WhiteIcon d="M1 3h14M1 8h14M1 13h14" className="size-[10px] text-gray-500" />
        <span>
          菜单(<u>M</u>)
        </span>
        <Caret />
      </button>
      <Picker label="选择过滤器" value="无选择过滤器" className="w-[82px]" />
      <Tool label="重置过滤器" icon="funnel" className="w-[23px]" />
      <Picker label="选择范围" value="整个装配" className="mr-[5px] w-[86px]" />
      <Tool label="高亮" icon="cylinder orange" on className="w-[14px]" />
      <Tool label="链接" icon="chain gray" dim className="w-5" />
      <Tool label="过滤器" icon="funnellist" drop />
      <Tool label="相连" icon="nodes" dim className="w-4" />
      <Tool label="体选择" icon="slab tan plus" />
      <Tool label="矩形选择" icon="select" drop />
      <Tool label="面选择" icon="cube light" className="w-4" />
      <Tool label="体" icon="cube tan" />
      <span className="mx-[5px] h-3 w-px bg-[#d8d8d8]" />
      <Picker label="图层" value="1" className="mr-[3px] w-[26px]" />
      <Tool label="图层设置" icon="winpart" />
      <Tool label="布局" icon="layout" />
      <Tool label="连接" icon="nodes" />
      <button type="button" className="w-[56px] shrink-0 pl-[3px] text-left text-[6px] whitespace-nowrap">简化装配（原有）</button>
      <Tool label="缩放" icon="zoomwin" drop />
      <Tool label="适合窗口" icon="fit" drop />
      <Tool label="视图" icon="bracket dark" drop />
      <Tool label="着色" icon="cube gray" drop />
      <Tool label="显示隐藏" icon="eye" drop />
      <Tool label="编辑截面" icon="stack gray gear" drop />
      <Tool label="背景" icon="window" drop />
      <span className="ml-1 h-3 w-px bg-[#d8d8d8]" />
      <Caret className="mr-1 ml-auto" />
    </div>
  );
}

/* ---------- side bars ---------- */

const leftTools = [
  ["抽取", "clamp dark"], ["推拉", "push"], ["复制", "elbow teal page"], ["圆柱", "cylinder light"],
  ["直线", "line"], ["圆弧", "arc"], ["圆", "circle"], ["相切圆", "tangent"], ["线段", "segment"],
  ["点", "plus"], ["样条", "spline"], ["圆角", "fillet"], ["曲线", "curve"], ["修剪", "trim"],
  ["圆弧和圆", "arccircle"], ["偏置", "offset"], ["环", "ring"], ["缠绕", "wrap"],
  ["片体", "sheet2 blue"], ["曲面", "surf gray"], ["桥接", "sheet2 pink"], ["扫掠", "slab blue"],
  ["缝合", "cube dark spark"], ["十字", "plus"], ["交点", "cross"],
];

const leftPairs = [["壳", "torus teal"], ["面", "surf teal"], ["球", "sphere light plus"], ["连接", "chain teal"]];

const rightTools = [
  ["弹簧", "spring"], ["块", "cube gray"], ["圆柱", "cylinder gray"], ["圆锥", "cone gray"], ["球", "sphere light"],
  ["管", "torus gray"], ["拔模", "cube mix"], ["抽壳", "cube mix2"], ["腔体", "hollow orange"],
  ["修剪体", "cube gray star"], ["拆分体", "surf light tri"], ["加厚", "cube light page"],
  ["替换面", "cube orange tri"], ["删除面", "cube orange tri"], ["偏置面", "cylinder orange tri"],
  ["保存", "diskette"], ["显示", "eyebox"], ["隐藏", "eyeslash"], ["反转", "swap"],
];

function SideBar({ tools, children, className }) {
  return (
    <aside className={`flex shrink-0 flex-col items-center bg-white pt-[5px] ${className}`}>
      <div className="flex flex-1 flex-col justify-between">
        {tools.map(([label, icon], i) => (
          <button key={i} type="button" aria-label={label} className="block">
            <Icon spec={icon} />
          </button>
        ))}
      </div>
      {children}
    </aside>
  );
}

/* ---------- graphics window ---------- */

function Viewport() {
  return (
    <main className="flex min-w-0 flex-1 flex-col bg-white">
      <div className="flex border-b-2 border-[#05668a]">
        <div className="flex h-3 items-center gap-[2px] bg-[#05668a] px-[2px] text-[7px] whitespace-nowrap text-white">
          <Icon spec="bracket gray" className="mr-px size-[9px]" />
          沈阳王工SZ. (160).prt
          <WhiteIcon d="M3 3h8v11H3zM6 1h8" className="size-[8px]" />
          <button type="button" aria-label="关闭文件">
            <WhiteIcon d="M3 3l10 10M13 3L3 13" className="size-[7px] stroke-2" />
          </button>
        </div>
      </div>
      <div className="min-h-0 flex-1 bg-linear-to-b from-[#27282b] to-[#58595b]">
        <svg viewBox="0 0 520 481" className="size-full" role="img" aria-label="模型">
          <defs>
            <linearGradient id="plate" x1="0" y1="0" x2="0" y2="1">
              <stop offset="0" stopColor="#8c9b9e" />
              <stop offset="1" stopColor="#97a5ac" />
            </linearGradient>
            <linearGradient id="ridge" x1="0" y1="0" x2="0" y2="1">
              <stop offset="0" stopColor="#e1e8f0" />
              <stop offset="0.5" stopColor="#d6e1e9" />
              <stop offset="1" stopColor="#abc0ca" />
            </linearGradient>
          </defs>
          <path d="M55 79h394v315H55z" fill="url(#plate)" />
          <path d="M75 99l98 26 257 100v7H75z" fill="#d8dfe7" />
          <path d="M75 242h355v7L173 350l-98 24z" fill="#afc2cc" />
          <path d="M75 231h355v11H75z" fill="url(#ridge)" />
          <path d="M75 231.500h355M75 242.500h355M173.500 124v226" stroke="#7a8b93" strokeWidth="0.8" fill="none" />
          <path d="M75 374l98-24 257-101v-24" fill="none" stroke="#7f9099" strokeWidth="0.8" />
          <path d="M75 374V99l98 26 257 100" fill="none" stroke="#a5b3b9" strokeWidth="0.6" />
          <circle cx="259" cy="187" r="1" fill="#c9d1d6" />
          <g stroke="#b9bdbf" fill="none">
            <circle cx="344.500" cy="68.500" r="5.500" strokeDasharray="6 2.600" strokeDashoffset="-1.300" />
            <path d="M337 68.500h15M344.500 61v15" />
          </g>
          <path d="M46.500 408.500h23v23h-23z" fill="none" stroke="#a3a8a8" />
          <path d="M70 420.500h17" stroke="#1d3fe0" strokeWidth="2" />
          <path d="M86 417.500l11 3-11 3z" fill="#1d3fe0" />
          <path d="M102 417l3 6M105 417l-3 6" stroke="#3b4690" strokeWidth="0.8" />
          <path d="M58.500 432v17" stroke="#e0262c" strokeWidth="2" />
          <path d="M55.500 447l3 11 3-11z" fill="#e0262c" />
          <path d="M57 463l3 5M60 463l-3 5" stroke="#a0363c" strokeWidth="0.8" />
        </svg>
      </div>
    </main>
  );
}

/* ---------- part navigator ---------- */

const treeRows = [
  { name: "模型视图", icon: "viewbox", toggle: "+" },
  { name: "摄像机", icon: "bracket tan", toggle: "+", mark: "check" },
  { name: "模型历史记录", icon: "square orange page", toggle: "-", mark: "dot", latest: true },
  { name: "体 (0)", icon: "bracket navy red", child: true, latest: true },
  { name: "包容体 (4)", icon: "hollow tan", child: true, latest: true },
  { name: "偏置区域 (5)", icon: "cube orange page", child: true, latest: true },
  { name: "替换面 (6)", icon: "cube orange gear", child: true, latest: true, current: true },
];

const EMPTY_ROWS = 30;

function Check({ className = "" }) {
  return (
    <svg viewBox="0 0 10 9" className={`h-[9px] w-[10px] shrink-0 ${className}`} fill="none" aria-hidden="true">
      <path d="M1 4.500l2.500 3L9 1" stroke="#4fc870" strokeWidth="1.500" />
    </svg>
  );
}

function EyeMark() {
  return (
    <svg viewBox="0 0 10 8" className="h-[7px] w-[9px] shrink-0" aria-hidden="true">
      <path d="M.5 4C3 .5 7 .5 9.500 4 7 7.500 3 7.500.5 4z" fill="#ddd" stroke="#555" strokeWidth="0.7" />
      <circle cx="5" cy="4" r="2.200" fill="#222" />
    </svg>
  );
}

function Navigator() {
  return (
    <section className="flex min-h-0 w-[208px] shrink-0 flex-col border-l-2 border-[#dcdfe0] bg-white pr-[3px] pl-[3px] text-[7px] text-[#333]">
      <h2 className="flex h-[17px] shrink-0 items-center gap-[6px] pl-px">
        <span className="h-[6px] w-[7px] border border-t-2 border-[#444]" />
        部件导航器
      </h2>
      <div className="min-h-0 flex-1 overflow-hidden border border-b-[3px] border-[#dfe1e2] border-b-[#c9c9c9]">
        <table className="w-full table-fixed border-collapse">
          <colgroup>
            <col />
            <col className="w-[13px]" />
            <col className="w-[13px]" />
            <col className="w-[55px]" />
            <col className="w-[9px]" />
          </colgroup>
          <thead>
            <tr className="h-[11px] bg-[#eeeeee] text-left leading-[11px] [&>th]:border-r [&>th]:border-[#dcdcdc] [&>th]:p-0 [&>th]:font-normal">
              <th>
                <span className="flex items-center gap-[10px] pl-[3px]">
                  名称
                  <Caret className="rotate-180" />
                </span>
              </th>
              <th className="text-center">当</th>
              <th className="text-center">最</th>
              <th>
                <span className="pl-[3px]">附注</span>
              </th>
              <th />
            </tr>
          </thead>
          <tbody className="[&_td]:border-r [&_td]:border-[#f0f0f0] [&_td]:p-0">
            {treeRows.map((row) => (
              <tr key={row.name} className="h-[11px] even:bg-[#f8f8f8]">
                <td>
                  <div className={`flex h-[11px] items-center leading-[11px] whitespace-nowrap ${row.child ? "ml-4 border-l border-[#e2e2e2] pl-1" : "pl-[3px]"} ${row.current ? "font-bold" : ""}`}>
                    {row.toggle && <span className="w-[6px] text-[6px]">{row.toggle}</span>}
                    {row.mark === "check" && <Check />}
                    {row.mark === "dot" && <span className="mr-px size-[9px] shrink-0 rounded-full border border-[#3a9a55] bg-[#4fcf6a]" />}
                    {row.child && <EyeMark />}
                    <Icon spec={row.icon} className="mr-px size-[10px]" />
                    {row.name}
                  </div>
                </td>
                <td>{row.current && <Icon spec="spring tan" className="mx-auto size-[9px]" />}</td>
                <td>{row.latest && <Check className="mx-auto" />}</td>
                <td />
                <td />
              </tr>
            ))}
            {Array.from({ length: EMPTY_ROWS }, (_, i) => (
              <tr key={i} className="h-[11px] even:bg-[#f8f8f8]">
                <td />
                <td />
                <td />
                <td />
                <td />
              </tr>
            ))}
          </tbody>
        </table>
      </div>
      <div className="mb-[3px] shrink-0 text-[8px] text-[#2c7388]">
        {["搜索", "相关性", "细节", "预览"].map((name) => (
          <button key={name} type="button" className="flex h-[13px] w-full items-center gap-1 border-b border-[#c4c4c4] pl-1 leading-3">
            <Caret className="-rotate-90" />
            {name}
          </button>
        ))}
      </div>
    </section>
  );
}

const resources = [
  ["装配导航器", "elbow gray", "h-6"],
  ["约束导航器", "cube orange bow", "h-6"],
  ["部件导航器", "bracket gray", "h-6 bg-white"],
  ["重用库", "bracket gray spark", "h-6"],
  ["HD3D 工具", "slab tan gear", "h-6"],
  ["视觉报告", "sphere dark spark", "h-7"],
  ["Web 浏览器", "globe", "h-[30px]"],
  ["历史记录", "clock", "h-[30px]"],
  ["颜色", "rainbow", "h-[23px]"],
  ["加工向导", "bluearrow", "h-[23px]"],
  ["角色", "toolbox", "h-[23px]"],
];

function ResourceBar() {
  return (
    <aside className="flex w-[18px] shrink-0 flex-col bg-[#d5d7d9]">
      <button type="button" aria-label="设置" className="mb-[6px] flex h-4 items-center justify-center">
        <Icon spec="gear" className="size-[9px]" />
      </button>
      {resources.map(([label, icon, style]) => (
        <button key={label} type="button" aria-label={label} className={`flex shrink-0 items-center justify-center ${style}`}>
          <Icon spec={icon} />
        </button>
      ))}
    </aside>
  );
}

/* ---------- bottom ---------- */

const bottomTools = [
  "ruler", "panel gray pen", "panel gray tri", "hollow orange tri", "plusinfo", "csys gray", "axes gray move", "axes",
  "axes3", "csys light", "dims", "stack light page", "stack gray pen", "stack light gear", "hollow tan", "slab tan",
  "frame orange", "cube orange page", "stack orange", "sheet2 light", "sheet orange", "sheet2 orange", "surf gray",
  "square orange move", "hullblue", "chain tan", "cube orange page", "book", "fan", "mirror", "orbit",
  "stack orange move", "slab orange gear",
];

const gridTools = [
  "cube orange lens", "slab teal", "sheet orange", "surf tan", "sheet blue", "cube gray", "hollow orange",
  "hollow mix", "hollow orange green", "slab purple", "box", "tray",
  "arch", "sheet blue", "sheet orange", "slab gray", "surf blue", "chain navy", "hollow tan", "sphere orange",
  "slab orange pen", "hatch", "surf gray pen",
];

function BottomBar() {
  return (
    <div className="flex h-[28px] shrink-0 items-center border-b border-[#d3bfc8] bg-white pl-[5px]">
      <div className="flex shrink-0 gap-1">
        {bottomTools.map((icon, i) => (
          <button key={i} type="button" aria-label={`工具 ${i + 1}`}>
            <Icon spec={icon} />
          </button>
        ))}
      </div>
      <div className="ml-2 grid w-[164px] shrink-0 grid-cols-12 gap-y-[2px] border-r border-[#e3e5e6]">
        {gridTools.map((icon, i) => (
          <button key={i} type="button" aria-label={`特征 ${i + 1}`} className="flex justify-center">
            <Icon spec={icon} className="size-[11px]" />
          </button>
        ))}
      </div>
      <Caret className="mt-[14px] mr-1 ml-auto" />
    </div>
  );
}

export default function App() {
  return (
    <div className="flex h-screen min-h-[640px] flex-col overflow-hidden bg-[#046a92] pr-[3px] pb-1 pl-[2px] font-['Noto_Sans','Noto_Sans_CJK_SC',sans-serif]">
      <header className="shrink-0">
        <TitleBar />
        <TabBar />
        <Ribbon />
        <SelectionBar />
      </header>
      <div className="flex min-h-0 flex-1">
        <SideBar tools={leftTools} className="w-7">
          <div className="mt-[3px] mb-5 grid grid-cols-2 gap-x-[2px] gap-y-1 border-b border-[#e3e5e6] pb-1">
            {leftPairs.map(([label, icon]) => (
              <button key={label} type="button" aria-label={label}>
                <Icon spec={icon} className="size-[10px]" />
              </button>
            ))}
          </div>
        </SideBar>
        <Viewport />
        <SideBar tools={rightTools} className="w-[21px]">
          <div className="mt-[3px] h-[155px] w-3 border-t border-[#e3e5e6]" />
        </SideBar>
        <Navigator />
        <ResourceBar />
      </div>
      <BottomBar />
      <footer className="h-[11px] shrink-0 bg-white pl-[2px] text-[6px] leading-[10px] font-medium text-[#222]">
        选择对象并使用 MB3，或者双击某一对象
      </footer>
    </div>
  );
}
